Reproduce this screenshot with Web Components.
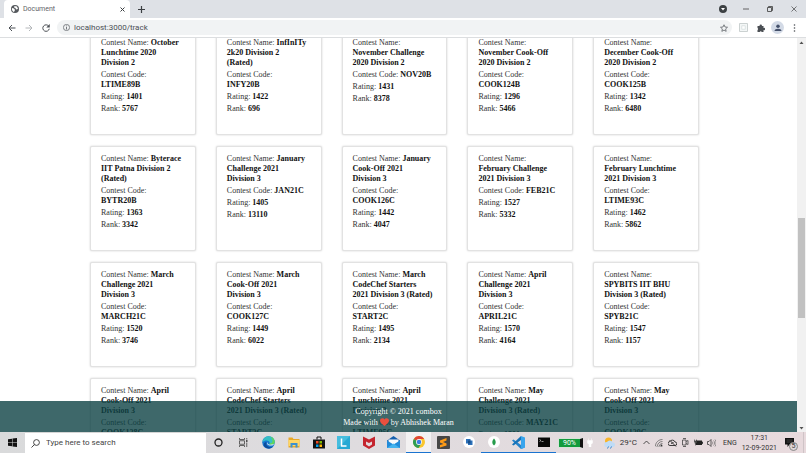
<!DOCTYPE html>
<html lang="en">
<head>
<meta charset="utf-8">
<title>Document</title>
<style>
html, body { height: 100%; margin: 0; }
body { overflow: hidden; background: #fff; }
</style>
</head>
<body>
<desktop-screen></desktop-screen>
<script>
function define(name, html, setup) {
  const template = document.createElement('template');
  template.innerHTML = html;
  customElements.define(name, class extends HTMLElement {
    constructor() {
      super();
      this.attachShadow({ mode: 'open' }).append(template.content.cloneNode(true));
    }
    connectedCallback() { if (setup) setup(this, this.shadowRoot); }
  });
}

const UI = 'Roboto, "Open Sans", sans-serif';
const RESET = `
  *, *::before { box-sizing: border-box; }
  button { border: 0; padding: 0; margin: 0; background: none; font: inherit; color: inherit; display: flex; align-items: center; justify-content: center; }
  input { border: 0; padding: 0; margin: 0; background: none; font: inherit; outline: 0; min-width: 0; }
  svg { display: block; flex: none; }`;

define('tab-strip', `<style>${RESET}
  :host { display: flex; height: 18px; background: #dee1e6; font: 7px/10px ${UI}; color: #5f6368; padding-left: 4px; }
  .tab { display: flex; align-items: center; gap: 4px; width: 126px; padding: 0 5px 0 7px; background: #fff; border-radius: 4px 4px 0 0; }
  .title { flex: 1; justify-content: flex-start; }
  .new { width: 23px; }
  .space { flex: 1; }
  .win { width: 24px; height: 17px; }
  .first { width: 22px; }
</style>
<div class="tab">
  <svg width="8" height="8" viewBox="0 0 16 16"><circle cx="8" cy="8" r="8" fill="#55595d"/><path d="M2 6l4 1 2 3-2 4C3 13 1 9 2 6zM7 2l5 1 2 5-4 1-1-3-3-1z" fill="#fff"/></svg>
  <button class="title">Document</button>
  <button aria-label="Close tab"><svg width="5" height="5" viewBox="0 0 10 10"><path d="M1 1l8 8M9 1l-8 8" stroke="#3c4043" stroke-width="2"/></svg></button>
</div>
<button class="new" aria-label="New tab"><svg width="7" height="7" viewBox="0 0 14 14"><path d="M7 0v14M0 7h14" stroke="#3c4043" stroke-width="2.4"/></svg></button>
<div class="space"></div>
<button class="win first" aria-label="Search tabs"><svg width="8" height="8" viewBox="0 0 16 16"><circle cx="8" cy="8" r="8" fill="#3c4043"/><path d="M4 6h8l-4 5z" fill="#fff"/></svg></button>
<button class="win" aria-label="Minimize"><svg width="6" height="6" viewBox="0 0 12 12"><path d="M0 6h12" stroke="#555" stroke-width="1.8"/></svg></button>
<button class="win" aria-label="Restore"><svg width="6" height="6" viewBox="0 0 12 12"><path d="M1 3h8v8H1zM3 3V1h8v8H9" fill="none" stroke="#444" stroke-width="1.7"/></svg></button>
<button class="win" aria-label="Close"><svg width="6" height="6" viewBox="0 0 12 12"><path d="M1 1l10 10M11 1L1 11" stroke="#444" stroke-width="1.4"/></svg></button>`);

define('address-toolbar', `<style>${RESET}
  :host { display: flex; align-items: center; box-sizing: border-box; height: 20px; background: #fff; border-bottom: 1px solid #dcdee0; font: 8px/12px ${UI}; color: #5f6368; padding: 0 3px; }
  button { width: 17px; height: 16px; }
  .box { flex: 1; display: flex; align-items: center; gap: 4px; height: 15px; margin: 0 3px; padding: 0 0 0 5px; border-radius: 8px; background: #f1f3f4; }
  .info { width: 8px; }
  input { flex: 1; color: #4b4f54; }
  .avatar { width: 13px; height: 13px; margin: 0 2px; border-radius: 50%; background: #d3dae6; }
</style>
<button aria-label="Back"><svg width="8" height="8" viewBox="0 0 16 16"><path d="M15 8H2M8 2L2 8l6 6" fill="none" stroke="#4b4f54" stroke-width="2"/></svg></button>
<button aria-label="Forward"><svg width="8" height="8" viewBox="0 0 16 16"><path d="M1 8h13M8 2l6 6-6 6" fill="none" stroke="#b4b7ba" stroke-width="2"/></svg></button>
<button aria-label="Reload"><svg width="8" height="8" viewBox="0 0 16 16"><path d="M13.500 4.500A6.500 6.500 0 1 0 14.500 9.500" fill="none" stroke="#4b4f54" stroke-width="2"/><path d="M15.500 0v7h-7z" fill="#4b4f54"/></svg></button>
<div class="box">
  <button class="info" aria-label="Site information"><svg width="7" height="7" viewBox="0 0 14 14"><circle cx="7" cy="7" r="6.200" fill="none" stroke="#5f6368" stroke-width="1.500"/><path d="M7 6v5M7 3v1.700" stroke="#5f6368" stroke-width="1.700"/></svg></button>
  <input type="text" aria-label="Address" value="localhost:3000/track">
  <button aria-label="Bookmark"><svg width="8" height="8" viewBox="0 0 16 16"><path d="M8 1.500l2 4.500 5 .5-3.700 3.300 1 4.900L8 12.200l-4.300 2.500 1-4.900L1 6.500 6 6z" fill="none" stroke="#5f6368" stroke-width="1.600"/></svg></button>
</div>
<button aria-label="Extension"><svg width="9" height="9" viewBox="0 0 18 18"><path d="M1 1h16v16H1z" fill="#f4f7f7" stroke="#c5cccc" stroke-width="1.800"/><path d="M5.500 5.500h7v7h-7z" fill="#fff" stroke="#d4dcdc" stroke-width="1.500"/></svg></button>
<button aria-label="Extensions"><svg width="8" height="8" viewBox="0 0 16 16"><path d="M1 4h4.500a2.200 2.200 0 1 1 4 0H13v4a2.200 2.200 0 1 1 0 4v4H9.500a2.200 2.200 0 0 0-4 0H1v-4a2.200 2.200 0 0 0 0-4z" fill="#4b4f54"/></svg></button>
<button class="avatar" aria-label="Profile"><svg width="8" height="8" viewBox="0 0 16 16"><circle cx="8" cy="4.500" r="3.500" fill="#44506a"/><path d="M1 14c0-6 14-6 14 0z" fill="#44506a"/></svg></button>
<button aria-label="Menu"><svg width="3" height="8" viewBox="0 0 6 16"><g fill="#4b4f54"><circle cx="3" cy="2" r="1.600"/><circle cx="3" cy="8" r="1.600"/><circle cx="3" cy="14" r="1.600"/></g></svg></button>`);

define('contest-card', `<style>${RESET}
  :host { display: block; box-sizing: border-box; height: 105px; padding: 7px 0 0 10px; border: 1px solid #e2e2e2; border-radius: 2px; box-shadow: 0 0 2px #ccc; background: #fff; white-space: nowrap; }
  p { margin: 0 0 2px; }
  b { color: #111; }
</style>
<p>Contest Name: <b id="name"></b></p>
<p>Contest Code: <b id="code"></b></p>
<p>Rating: <b id="rating"></b></p>
<p>Rank: <b id="rank"></b></p>`, (el, root) => {
  for (const key of ['name', 'code', 'rating', 'rank']) {
    const target = root.getElementById(key);
    target.replaceChildren();
    el.getAttribute(key).split('|').forEach((line, i) => {
      if (i) target.append(document.createElement('br'));
      target.append(line);
    });
  }
});

define('page-footer', `<style>${RESET}
  :host { display: block; padding: 5px 0 4px; background: rgba(14, 66, 69, .8); color: #fff; text-align: center; font-size: 8px; line-height: 11px; }
  p { margin: 0; }
  svg { display: inline-block; vertical-align: -1px; }
</style>
<p>Copyright © 2021 combox</p>
<p>Made with <svg width="9" height="8" viewBox="0 0 18 16" role="img" aria-label="love"><path d="M9 16C4 12 0 9 0 5 0 0 7-1.500 9 3c2-4.500 9-3 9 2 0 4-4 7-9 11z" fill="#e8503f"/></svg> by Abhishek Maran</p>`);

define('page-scrollbar', `<style>
  :host { display: flex; flex-direction: column; align-items: center; width: 9px; background: #f1f1f1; padding: 3px 0 2px; box-sizing: border-box; }
  .before { flex: 174; } .thumb { flex: 99; width: 7px; background: #c1c1c1; } .after { flex: 109; }
  svg { display: block; flex: none; }
</style>
<svg width="5" height="3" viewBox="0 0 10 6"><path d="M1 6l4-5 4 5z" fill="#505050"/></svg>
<div class="before"></div><div class="thumb"></div><div class="after"></div>
<svg width="5" height="3" viewBox="0 0 10 6"><path d="M1 0l4 5 4-5z" fill="#505050"/></svg>`);

const contests = [
  ['October|Lunchtime 2020|Division 2', '|LTIME89B', 1401, 5767],
  ['InfInITy|2k20 Division 2|(Rated)', '|INFY20B', 1422, 696],
  ['|November Challenge|2020 Division 2', 'NOV20B', 1431, 8378],
  ['|November Cook-Off|2020 Division 2', '|COOK124B', 1296, 5466],
  ['|December Cook-Off|2020 Division 2', '|COOK125B', 1342, 6480],
  ['Byterace|IIT Patna Division 2|(Rated)', '|BYTR20B', 1363, 3342],
  ['January|Challenge 2021|Division 3', 'JAN21C', 1405, 13110],
  ['January|Cook-Off 2021|Division 3', '|COOK126C', 1442, 4047],
  ['|February Challenge|2021 Division 3', 'FEB21C', 1527, 5332],
  ['|February Lunchtime|2021 Division 3', '|LTIME93C', 1462, 5862],
  ['March|Challenge 2021|Division 3', '|MARCH21C', 1520, 3746],
  ['March|Cook-Off 2021|Division 3', '|COOK127C', 1449, 6022],
  ['March|CodeChef Starters|2021 Division 3 (Rated)', '|START2C', 1495, 2134],
  ['April|Challenge 2021|Division 3', '|APRIL21C', 1570, 4164],
  ['|SPYBITS IIT BHU|Division 3 (Rated)', '|SPYB21C', 1547, 1157],
  ['April|Cook-Off 2021|Division 3', '|COOK128C', '', ''],
  ['April|CodeChef Starters|2021 Division 3 (Rated)', '|START3C', '', ''],
  ['April|Lunchtime 2021|Division 3', '|LTIME95C', '', ''],
  ['May|Challenge 2021|Division 3 (Rated)', 'MAY21C', 1801, ''],
  ['May|Cook-Off 2021|Division 3', '|COOK129C', '', '']
];

define('contest-page', `<style>${RESET}
  :host { display: flex; position: relative; overflow: hidden; font: 8px/10px "Liberation Serif", serif; color: #333; }
  main { flex: 1; position: relative; overflow: hidden; }
  .grid { display: grid; grid-template-columns: repeat(5, 1fr); gap: 11px 20px; margin: -8px 98px 0 90px; }
  page-footer { position: absolute; left: 0; right: 0; bottom: 0; }
</style>
<main><div class="grid"></div><page-footer></page-footer></main>
<page-scrollbar></page-scrollbar>`, (el, root) => {
  const grid = root.querySelector('.grid');
  grid.replaceChildren(...contests.map(([name, code, rating, rank]) => {
    const card = document.createElement('contest-card');
    Object.entries({ name, code, rating, rank }).forEach(([k, v]) => card.setAttribute(k, v));
    return card;
  }));
});

define('task-button', `<style>${RESET}
  :host { display: block; width: 25px; height: 100%; }
  button { width: 100%; height: 100%; border-bottom: 1px solid transparent; }
  :host([open]) button { border-bottom-color: #1a73d0; }
  :host([active]) button { background: #f3f1f2; border-bottom-color: #1a73d0; }
</style><button><slot></slot></button>`, (el, root) => {
  root.querySelector('button').setAttribute('aria-label', el.getAttribute('label'));
});

define('task-bar', `<style>${RESET}
  :host { display: flex; align-items: center; height: 21px; background: linear-gradient(90deg, #d9dadb, #dfdcdf 45%, #e8dadd); font: 7px/10px ${UI}; color: #333; }
  .start { width: 25px; height: 100%; }
  .search { display: flex; align-items: center; gap: 6px; width: 181px; height: 100%; padding-left: 6px; background: #fff; border-top: 1px solid #d5d5d5; font-size: 8px; }
  .search input { flex: 1; }
  .search input::placeholder { color: #444; opacity: 1; }
  .apps { display: flex; height: 100%; }
  .charge { display: flex; align-items: center; justify-content: center; width: 25px; height: 10px; margin: 0 4px 0 2px; background: #139b3d; border: 1px solid #d6e2d8; border-right: 3px solid #111; color: #fff; }
  .space { flex: 1; }
  .weather { gap: 4px; margin-right: 5px; font-size: 8px; }
  .tray { display: flex; gap: 4px; }
  .tray button { width: 9px; height: 16px; }
  .lang { margin: 0 5px 0 7px; }
  .clock { display: block; text-align: center; line-height: 10px; }
  .notes { position: relative; width: 22px; height: 100%; margin: 0 2px 0 5px; padding-left: 3px; justify-content: flex-start; border-right: 1px solid #cfc4c7; }
  .badge { position: absolute; right: 5px; bottom: 2px; width: 9px; height: 9px; border: 1px solid #888; border-radius: 50%; background: #ded6d8; font-size: 7px; line-height: 7px; }
</style>
<button class="start" aria-label="Start"><svg width="9" height="9" viewBox="0 0 18 18"><path d="M0 2.500L8 1.400V8.500H0zM9 1.200L18 0V8.500H9zM0 9.500H8V16.600L0 15.500zM9 9.500H18V18L9 16.800z" fill="#111"/></svg></button>
<label class="search"><svg width="9" height="9" viewBox="0 0 18 18"><circle cx="11" cy="7" r="5.800" fill="none" stroke="#333" stroke-width="1.800"/><path d="M7 11l-6 6" stroke="#333" stroke-width="1.800"/></svg><input type="text" placeholder="Type here to search" aria-label="Type here to search"></label>
<div class="apps">
  <task-button label="Cortana"><svg width="9" height="9" viewBox="0 0 18 18"><circle cx="9" cy="9" r="7" fill="none" stroke="#222" stroke-width="2.600"/></svg></task-button>
  <task-button label="Task view"><svg width="9" height="9" viewBox="0 0 18 18"><path d="M1 0v3h10V0M1 18v-3h10v3M1 5.500h10v7H1zM15.500 0v3M15.500 9v9" fill="none" stroke="#444" stroke-width="1.600"/><path d="M14 4.500h3v3h-3z" fill="#222"/></svg></task-button>
  <task-button label="Edge"><svg width="13" height="13" viewBox="0 0 26 26"><circle cx="13" cy="13" r="12.500" fill="#1577cf"/><path d="M1 12C2 4 8 .5 13 .5c8 0 12.500 6 12.500 11 0 4-3 6-7 6-3 0-4-1-3-3 1-6-9-8-14.500-2.500z" fill="#35bfc6"/><path d="M17 1c6 2 8.500 7 8.500 11 0 3-3 5.500-7 5.500-3 0-4-1-3-3 7 1 7-7 1.500-13.500z" fill="#61d65b"/><path d="M9 12c-3 7 5 13 13 9-5 6-15 5-18-1-2-5 2-8 5-8z" fill="#0d4d9c"/><path d="M11 12c-1 4 3 6 9 5l4-1c-1 2-3 3-5 3-6 1-11-3-8-7z" fill="#e4edf4"/></svg></task-button>
  <task-button label="File Explorer"><svg width="12" height="11" viewBox="0 0 24 22"><path d="M1 1h8l2 3h12v17H1z" fill="#e9a928"/><path d="M1 6h22v12H1z" fill="#ffd766"/><path d="M5 21v-9h14v9h-4v-5H9v5z" fill="#3d91cf"/></svg></task-button>
  <task-button label="Microsoft Store"><svg width="12" height="13" viewBox="0 0 24 26"><path d="M8 7V2h8v5" fill="none" stroke="#111" stroke-width="2"/><path d="M0 7h24v18H0z" fill="#111"/><path d="M6 10h5v5H6z" fill="#f04b23"/><path d="M13 10h5v5h-5z" fill="#7dba00"/><path d="M6 17h5v5H6z" fill="#009fe8"/><path d="M13 17h5v5h-5z" fill="#ffb900"/></svg></task-button>
  <task-button label="Lenovo Vantage"><svg width="13" height="13" viewBox="0 0 26 26"><path d="M0 0h26v26H0z" fill="#27a9d4"/><path d="M0 0h26L0 26z" fill="#46bdde"/><path d="M9 5v15h10" fill="none" stroke="#fff" stroke-width="3"/></svg></task-button>
  <task-button label="McAfee"><svg width="12" height="13" viewBox="0 0 24 26"><path d="M0 1l12 6 12-6v18l-12 7L0 19z" fill="#c4242e"/><path d="M6 11l6 3 6-3v6l-6 4-6-4z" fill="#e2d9dc"/></svg></task-button>
  <task-button label="Mail"><svg width="13" height="12" viewBox="0 0 26 24"><path d="M0 9L13 0l13 9v15H0z" fill="#155fae"/><path d="M3 7h20v10H3z" fill="#f8fafc"/><path d="M0 9l13 8 13-8v15H0z" fill="#228bd9"/><path d="M0 24l13-9 13 9z" fill="#43b3ef"/></svg></task-button>
  <task-button label="Chrome" active><svg width="12" height="12" viewBox="0 0 24 24"><circle cx="12" cy="12" r="12" fill="#fbc62d"/><path d="M12 12L1.600 6A12 12 0 0 1 22.400 6H12z" fill="#df4635"/><path d="M1.600 6A12 12 0 0 0 11 24l6-9-5-3z" fill="#2f9d54"/><circle cx="12" cy="12" r="5.800" fill="#fff"/><circle cx="12" cy="12" r="4.500" fill="#3e7be5"/></svg></task-button>
  <task-button label="Sublime Text"><svg width="13" height="13" viewBox="0 0 26 26"><rect width="26" height="26" rx="2" fill="#474747"/><path d="M6 9l13-5v5l-7 3 7 3v4L6 23v-5l7-2-7-3z" fill="#ff9b16"/></svg></task-button>
  <task-button label="Databases"><svg width="12" height="12" viewBox="0 0 24 24"><circle cx="12" cy="12" r="12" fill="#fff"/><path d="M6 6h9v3h4v9h-9v-3H6z" fill="#2c70b9"/><path d="M10 9h5v6h-5z" fill="#174d87"/></svg></task-button>
  <task-button label="MongoDB Compass" open><svg width="12" height="12" viewBox="0 0 24 24"><circle cx="12" cy="12" r="12" fill="#fff"/><path d="M12 5c5 5 4 11 0 14-4-3-5-9 0-14z" fill="#269c4b"/></svg></task-button>
  <task-button label="Visual Studio Code" open><svg width="13" height="13" viewBox="0 0 26 26"><path d="M3 7L0 9l18 17 8-3-8-5z" fill="#2583c9"/><path d="M18 0l8 3v20l-8 3z" fill="#38a4ed"/><path d="M18 0L0 17l3 2 15-11z" fill="#1673b9"/></svg></task-button>
  <task-button label="Command Prompt" open><svg width="12" height="10" viewBox="0 0 24 20"><path d="M0 0h24v20H0z" fill="#090909"/><path d="M0 0h24v2H0z" fill="#777"/><path d="M3 5l3 2-3 2M7 9h4" stroke="#ddd" stroke-width="1.300" fill="none"/></svg></task-button>
</div>
<div class="charge">90%</div>
<svg width="6" height="9" viewBox="0 0 12 18"><path d="M3 1v4M9 1v4M1 5h10v5l-3 3v5H4v-5l-3-3z" fill="#fff" stroke="#fff"/></svg>
<div class="space"></div>
<button class="weather"><svg width="12" height="12" viewBox="0 0 24 24"><circle cx="9" cy="8" r="7" fill="#f8b42a"/><path d="M5 20a5 5 0 0 1 1-10 6 6 0 0 1 11 1 4.500 4.500 0 0 1 1 9z" fill="#bfdcf6"/><path d="M9 19l-2 4M15 19l-2 4" stroke="#3487d1" stroke-width="2"/></svg>29°C</button>
<div class="tray">
  <button aria-label="Hidden icons"><svg width="7" height="7" viewBox="0 0 14 14"><path d="M1 10l6-6 6 6" fill="none" stroke="#333" stroke-width="1.700"/></svg></button>
  <button aria-label="Network"><svg width="8" height="8" viewBox="0 0 16 16"><path d="M1 14C1 7 7 1 15 1M5 14c0-5 4-9 10-9M9 14c0-3 2-5 6-5" fill="none" stroke="#555" stroke-width="1.400"/><circle cx="13" cy="13" r="1.800" fill="#333"/><path d="M1 15h14" stroke="#888"/></svg></button>
  <button aria-label="OneDrive"><svg width="9" height="8" viewBox="0 0 18 16"><path d="M4 13a4 4 0 0 1 0-8 5.500 5.500 0 0 1 10 1 3.500 3.500 0 0 1 0 7z" fill="none" stroke="#333" stroke-width="1.900"/><path d="M3 2l13 13M6 9l5-2" stroke="#333" stroke-width="1.900"/></svg></button>
  <button aria-label="Meet Now"><svg width="8" height="9" viewBox="0 0 16 18"><path d="M3 4h7v10H3zM10 7l4-2v8l-4-2M4 1h6M4 17h6" fill="none" stroke="#444" stroke-width="1.600"/></svg></button>
  <button aria-label="Battery"><svg width="9" height="7" viewBox="0 0 18 14"><path d="M4 3h12v9H4z" fill="#222"/><path d="M16 6h2v3h-2zM1 1v3M5 1v3M0 4h6v4H3v5" stroke="#222" fill="#555"/></svg></button>
  <button aria-label="Volume"><svg width="9" height="8" viewBox="0 0 18 16"><path d="M1 5h3l4-4v14l-4-4H1z" fill="none" stroke="#333" stroke-width="1.500"/><path d="M10 5c2 2 2 4 0 6M13 3c3 3 3 7 0 10M16 1c3 4 3 10 0 14" fill="none" stroke="#666" stroke-width="1.300"/></svg></button>
</div>
<button class="lang">ENG</button>
<button class="clock">17:31<br>12-09-2021</button>
<button class="notes" aria-label="Notifications"><svg width="9" height="9" viewBox="0 0 18 18"><path d="M0 0h18v13H9l-4 5v-5H0z" fill="#111"/><path d="M3 4h12M3 8h12" stroke="#777"/></svg><span class="badge">5</span></button>`);

define('desktop-screen', `<style>
  :host { display: flex; flex-direction: column; height: 100vh; }
  tab-strip, address-toolbar, task-bar { flex: none; }
  contest-page { flex: 1; min-height: 0; }
</style>
<tab-strip></tab-strip>
<address-toolbar></address-toolbar>
<contest-page></contest-page>
<task-bar></task-bar>`);
</script>
</body>
</html>
